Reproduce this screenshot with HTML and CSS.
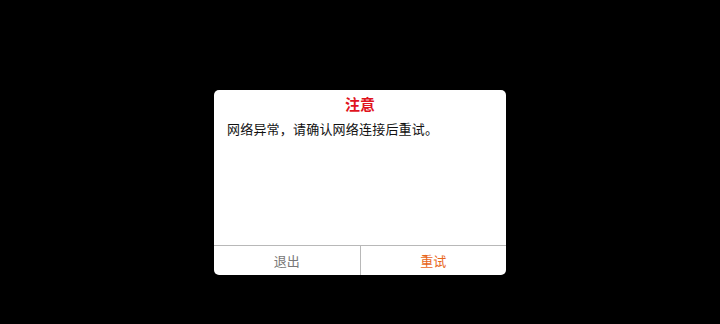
FILE: index.html
```html
<!DOCTYPE html>
<html lang="zh">
<head>
    <meta charset="UTF-8">
    <meta name="viewport" content="width=device-width, initial-scale=1.0">
    <title>注意</title>
    <link rel="stylesheet" href="styles.css">
</head>
<body>

    <div class="dialog">
        <div class="dialog-body">
            <h2 class="dialog-title">注意</h2>
            <p class="dialog-text">网络异常，请确认网络连接后重试。</p>
        </div>
        <div class="dialog-buttons">
            <div class="btn btn-exit">退出</div>
            <div class="btn btn-retry">重试</div>
        </div>
    </div>

</body>
</html>
```

FILE: styles.css
```css
html, body {
    margin: 0;
    padding: 0;
    height: 100%;
    background-color: #000;
}

body {
    font-family: "Noto Sans CJK SC", "Noto Sans", sans-serif;
    padding-top: 90px;
    box-sizing: border-box;
}

.dialog {
    width: 292px;
    height: 185px;
    margin: 0 auto;
    background-color: #fff;
    border-radius: 5px;
    display: flex;
    flex-direction: column;
    overflow: hidden;
}

.dialog-body {
    flex: 1;
    padding: 3px 13px 0;
}

.dialog-title {
    margin: 0;
    text-align: center;
    color: #e0141e;
    font-size: 15px;
    font-weight: bold;
    line-height: 22px;
}

.dialog-text {
    margin: 4px 0 0;
    color: #111;
    font-size: 13px;
    line-height: 20px;
    letter-spacing: 0.2px;
}

.dialog-buttons {
    display: flex;
    height: 29px;
    border-top: 1px solid #b8b8b8;
}

.btn {
    flex: 1;
    display: flex;
    align-items: center;
    justify-content: center;
    font-size: 13px;
}

.btn-exit {
    color: #777;
    border-right: 1px solid #b8b8b8;
}

.btn-retry {
    color: #e8661a;
}
```
